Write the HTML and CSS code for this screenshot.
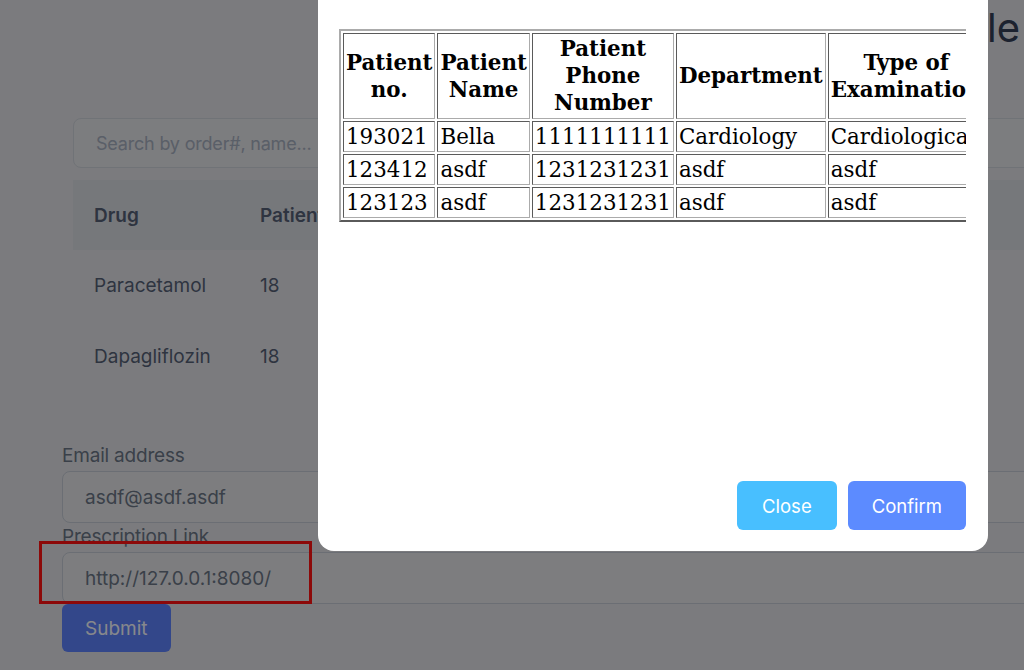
FILE: index.html
```html
<!DOCTYPE html>
<html lang="en">
<head>
<meta charset="utf-8">
<title>Prescriptions</title>
<link rel="stylesheet" href="styles.css">
</head>
<body>
<div class="page">
  <header class="topbar">
    <h1 class="title">Prescription Schedule</h1>
  </header>

  <section class="list">
    <input class="search" type="text" placeholder="Search by order#, name...">
    <table class="drugs">
      <thead>
        <tr><th class="c-drug">Drug</th><th>Patient</th></tr>
      </thead>
      <tbody>
        <tr><td>Paracetamol</td><td>18</td></tr>
        <tr><td>Dapagliflozin</td><td>18</td></tr>
      </tbody>
    </table>
  </section>

  <form class="form">
    <label class="label">Email address</label>
    <input class="field" type="text" value="asdf@asdf.asdf">
    <label class="label label-2">Prescription Link</label>
    <div class="field-wrap">
      <input class="field" type="text" value="http://127.0.0.1:8080/">
      <div class="highlight"></div>
    </div>
    <button class="submit" type="button">Submit</button>
  </form>
</div>

<div class="backdrop"></div>

<div class="modal">
  <div class="modal-body">
    <div class="table-clip">
      <table class="ptable">
        <thead>
          <tr>
            <th>Patient no.</th>
            <th>Patient Name</th>
            <th>Patient Phone Number</th>
            <th>Department</th>
            <th>Type of Examination</th>
          </tr>
        </thead>
        <tbody>
          <tr><td>193021</td><td>Bella</td><td>1111111111</td><td>Cardiology</td><td>Cardiological</td></tr>
          <tr><td>123412</td><td>asdf</td><td>1231231231</td><td>asdf</td><td>asdf</td></tr>
          <tr><td>123123</td><td>asdf</td><td>1231231231</td><td>asdf</td><td>asdf</td></tr>
        </tbody>
      </table>
    </div>
  </div>
  <div class="modal-footer">
    <button class="btn btn-close" type="button">Close</button>
    <button class="btn btn-confirm" type="button">Confirm</button>
  </div>
</div>
</body>
</html>
```

FILE: styles.css
```css
* { box-sizing: border-box; }

html, body {
  margin: 0;
  width: 1024px;
  height: 670px;
  overflow: hidden;
}

body {
  position: relative;
  background: #e0e1e5;
  font-family: Inter, "Noto Sans", sans-serif;
  color: #556076;
}

.page {
  padding-left: 62px;
}

.topbar {
  height: 60px;
  display: flex;
  justify-content: flex-end;
  align-items: flex-start;
}

.title {
  margin: 6px 4px 0 0;
  font-size: 40px;
  line-height: 44px;
  font-weight: 400;
  color: #333e57;
  white-space: nowrap;
}

.list {
  margin: 58px 0 0 11px;
}

.search {
  display: block;
  width: 1000px;
  height: 50px;
  border: 1px solid #cdd1d9;
  border-radius: 8px;
  background: #e2e3e7;
  padding: 0 22px;
  font-family: Inter, sans-serif;
  font-size: 18px;
  letter-spacing: -0.2px;
  color: #556076;
  outline: none;
}
.search::placeholder { color: #a4adbd; }

.drugs {
  margin-top: 12px;
  width: 1000px;
  border-collapse: collapse;
  font-size: 19px;
}
.drugs th {
  height: 70px;
  background: #d7dae0;
  text-align: left;
  font-weight: 600;
  padding: 0 0 0 21px;
}
.drugs td {
  height: 71px;
  padding: 0 0 0 21px;
  font-weight: 400;
}
.drugs .c-drug { width: 166px; }

.form {
  margin-top: 53px;
  width: 1000px;
}

.label {
  display: block;
  font-size: 19px;
  line-height: 22px;
  color: #6b7585;
  letter-spacing: -0.2px;
}

.field {
  display: block;
  width: 100%;
  height: 52px;
  margin-top: 4px;
  border: 1px solid #c3c8d3;
  border-radius: 8px;
  background: #e3e4e8;
  padding: 0 22px;
  font-family: Inter, sans-serif;
  font-size: 19px;
  color: #6b7585;
  outline: none;
}

.label-2 { margin-top: 3px; }

.field-wrap {
  position: relative;
}

.highlight {
  position: absolute;
  left: -23px;
  top: -11px;
  width: 273px;
  height: 63px;
  border: 3px solid #ff1212;
  pointer-events: none;
}

.submit {
  display: block;
  height: 48px;
  padding: 0 23px;
  border: none;
  border-radius: 6px;
  background: #5d81fb;
  color: #f5f7ff;
  font-family: Inter, sans-serif;
  font-size: 19px;
}

.backdrop {
  position: fixed;
  inset: 0;
  background: rgba(0, 0, 0, 0.45);
}

.modal {
  position: fixed;
  left: 318px;
  top: -16px;
  width: 670px;
  height: 567px;
  background: #ffffff;
  border-radius: 16px;
  display: flex;
  flex-direction: column;
}

.modal-body {
  flex: 1;
  padding: 45px 22px 0 21px;
}

.table-clip {
  overflow: hidden;
}

.ptable {
  border-collapse: separate;
  border-spacing: 2px;
  border: 2px solid;
  border-color: #ababab #5a5a5a #5a5a5a #ababab;
  font-family: "DejaVu Serif", serif;
  font-size: 21.4px;
  line-height: 27.2px;
  color: #000;
}
.ptable th,
.ptable td {
  border: 1px solid;
  border-color: #5a5a5a #ababab #ababab #5a5a5a;
  padding: 1px 2px;
}
.ptable th {
  font-weight: 700;
  text-align: center;
}
.ptable td {
  text-align: left;
  white-space: nowrap;
}

.modal-footer {
  display: flex;
  justify-content: flex-end;
  gap: 11px;
  padding: 0 22px 21px 0;
}

.btn {
  height: 49px;
  border: none;
  border-radius: 6px;
  color: #ffffff;
  font-family: Inter, sans-serif;
  font-size: 18.5px;
}
.btn-close { background: #48bfff; padding: 0 25px; }
.btn-confirm { background: #5c8bff; padding: 0 24px; }
```
